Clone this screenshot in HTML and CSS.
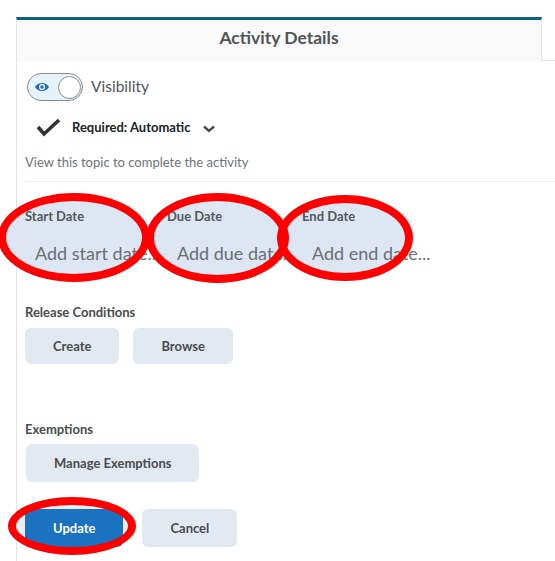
FILE: index.html
```html
<!DOCTYPE html>
<html lang="en">
<head>
<meta charset="utf-8">
<title>Activity Details</title>
<link rel="stylesheet" href="styles.css">
</head>
<body>
<div class="page">
  <div class="mark-fill m1"></div>
  <div class="mark-fill m2"></div>
  <div class="mark-fill m3"></div>
  <div class="mark-fill m4"></div>

  <div class="panel">
    <div class="tabs">
      <div class="tab">Activity Details</div>
      <div class="tab-rest"></div>
    </div>
    <div class="content">
      <div class="vis-row">
        <span class="toggle">
          <span class="eye">
            <svg width="16" height="12" viewBox="0 0 16 12"><path d="M1 6 C4 0.8 12 0.8 15 6 C12 11.2 4 11.2 1 6Z" fill="#1b6ec2"/><circle cx="8" cy="6" r="2.4" fill="none" stroke="#fff" stroke-width="1.2"/></svg>
          </span>
          <span class="knob"></span>
        </span>
        <span class="vis-label">Visibility</span>
      </div>

      <div class="req-row">
        <svg class="check" width="24" height="20" viewBox="0 0 24 20"><polyline points="2,10 8,17 23,3" fill="none" stroke="#333" stroke-width="3.6"/></svg>
        <span class="req">Required: Automatic</span>
        <svg class="chev" width="12" height="8" viewBox="0 0 12 8"><polyline points="1,1.5 6,6 11,1.5" fill="none" stroke="#494c4e" stroke-width="2.4"/></svg>
      </div>

      <p class="hint">View this topic to complete the activity</p>
      <div class="sep"></div>

      <div class="dates">
        <div class="date">
          <div class="label">Start Date</div>
          <div class="placeholder">Add start date...</div>
        </div>
        <div class="date">
          <div class="label">Due Date</div>
          <div class="placeholder">Add due date...</div>
        </div>
        <div class="date">
          <div class="label">End Date</div>
          <div class="placeholder">Add end date...</div>
        </div>
      </div>

      <div class="group release">
        <div class="label">Release Conditions</div>
        <div class="btns">
          <button class="btn btn-sm">Create</button>
          <button class="btn btn-sm">Browse</button>
        </div>
      </div>

      <div class="group exempt">
        <div class="label">Exemptions</div>
        <div class="btns">
          <button class="btn">Manage Exemptions</button>
        </div>
      </div>

      <div class="actions">
        <button class="btn btn-primary">Update</button>
        <button class="btn">Cancel</button>
      </div>
    </div>
  </div>

  <div class="mark-ring m1"></div>
  <div class="mark-ring m2"></div>
  <div class="mark-ring m3"></div>
  <div class="mark-ring m4"></div>
</div>
</body>
</html>
```

FILE: styles.css
```css
html, body {
  margin: 0;
  padding: 0;
  background: #fff;
}
body {
  font-family: Lato, "Open Sans", "Liberation Sans", sans-serif;
  color: #494c4e;
  width: 555px;
  height: 561px;
  overflow: hidden;
}
.page {
  position: relative;
  padding: 17px 0 0 16px;
  height: 561px;
  box-sizing: border-box;
}
.panel {
  position: relative;
  z-index: 1;
  height: 100%;
  display: flex;
  flex-direction: column;
}
.tabs {
  display: flex;
  height: 44px;
}
.tab {
  width: 526px;
  box-sizing: border-box;
  border-top: 3px solid #0b6180;
  border-left: 1px solid #e3e3e3;
  border-right: 1px solid #e3e3e3;
  background: #f9f9f9;
  text-align: center;
  font-weight: 700;
  font-size: 17.5px;
  line-height: 36px;
  color: #505456;
}
.tab-rest {
  flex: 1;
  border-bottom: 1px solid #e3e3e3;
}
.content {
  flex: 1;
  border-left: 1px solid #e3e3e3;
  padding-left: 8px;
}
.vis-row {
  display: flex;
  align-items: center;
  margin-top: 12px;
  margin-left: 2px;
  height: 28px;
}
.toggle {
  width: 56px;
  height: 28px;
  box-sizing: border-box;
  border: 1px solid #878c8f;
  border-radius: 14px;
  background: #e6f2fc;
  display: flex;
  align-items: center;
  justify-content: space-between;
  padding: 0 1px 0 6px;
}
.eye {
  display: flex;
  width: 16px;
  height: 12px;
}
.knob {
  width: 23px;
  height: 23px;
  box-sizing: border-box;
  border: 1px solid #878c8f;
  border-radius: 50%;
  background: #fff;
}
.vis-label {
  margin-left: 8px;
  margin-top: -3px;
  font-size: 15.5px;
  color: #4f5355;
}
.req-row {
  display: flex;
  align-items: center;
  margin-top: 16px;
  height: 20px;
}
.check {
  margin-left: 11px;
}
.req {
  margin-left: 12px;
  font-weight: 700;
  font-size: 13px;
  color: #202122;
}
.chev {
  margin-left: 13px;
  margin-top: 3px;
}
.hint {
  margin: 16px 0 0;
  font-size: 13px;
  line-height: 18px;
  color: #6e7376;
}
.sep {
  margin-top: 10px;
  height: 1px;
  background: #efefef;
}
.dates {
  display: grid;
  grid-template-columns: 142px 135px 1fr;
  margin-top: 25px;
}
.label {
  font-weight: 700;
  font-size: 13px;
  line-height: 18px;
  color: #53575a;
}
.placeholder {
  margin-top: 16px;
  padding-left: 10px;
  font-size: 18px;
  line-height: 24px;
  color: #6a6f72;
  white-space: nowrap;
}
.group .label {
  color: #494c4e;
}
.release {
  margin-top: 38px;
}
.exempt {
  margin-top: 56px;
}
.btns {
  display: flex;
  gap: 14px;
  margin-top: 7px;
}
.exempt .btns {
  margin-top: 6px;
  margin-left: 1px;
}
.btn {
  font-family: inherit;
  font-weight: 700;
  font-size: 13px;
  color: #494c4e;
  background: #e3e9f1;
  border: none;
  border-radius: 6px;
  height: 38px;
  padding: 0 28px;
}
.btn-sm {
  height: 36px;
}
.actions {
  display: flex;
  gap: 19px;
  margin-top: 27px;
}
.btn-primary {
  background: #1a72c0;
  color: #fff;
}

/* annotation ellipses */
.mark-fill, .mark-ring {
  position: absolute;
  box-sizing: border-box;
  border-radius: 50%;
}
.mark-fill {
  z-index: 0;
  background: #dce7f3;
}
.mark-ring {
  z-index: 2;
  border: 8px solid #ff0000;
}
.m1 { left: -2px; top: 193px; width: 152px; height: 89px; }
.m2 { left: 146px; top: 193px; width: 143px; height: 90px; }
.m3 { left: 277px; top: 195px; width: 136px; height: 86px; }
.m4 { left: 8px; top: 497px; width: 128px; height: 58px; }
.mark-fill.m4 { background: #e9eff6; }
```
